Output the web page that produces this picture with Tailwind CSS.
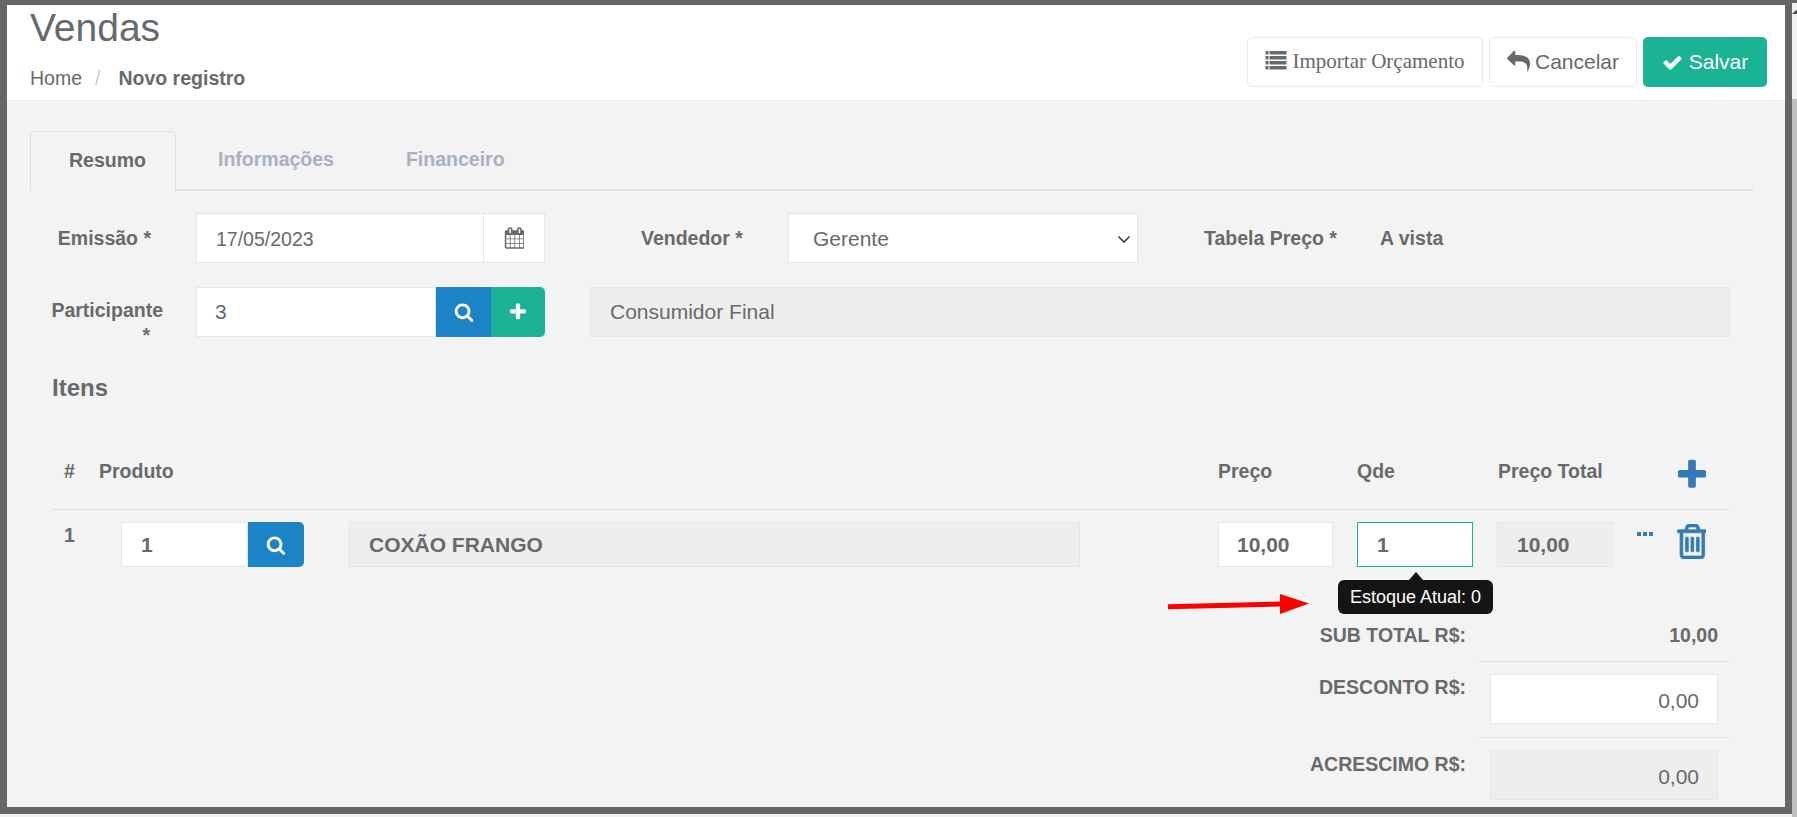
<!DOCTYPE html>
<html lang="pt-BR">
<head>
    <meta charset="UTF-8">
    <title>Vendas</title>
    <script src="https://cdn.jsdelivr.net/npm/@tailwindcss/browser@4"></script>
</head>
<body class="bg-[#f1f1f1] font-['Liberation_Sans',Arial,sans-serif] text-[#676a6c] text-[19.5px]">
<div class="w-[1797px] h-[817px] overflow-hidden flex">
    <!-- Window frame -->
    <div class="relative w-[1792px] h-[814px] shrink-0 border-t-[5px] border-x-[7px] border-b-[7px] border-[#666666] bg-[#f3f3f3] overflow-hidden">

        <!-- Page heading -->
        <header class="h-[96px] bg-white border-b border-[#e7eaec] flex justify-between pl-[23px] pr-[18px]">
            <div>
                <h1 class="text-[39px] leading-[40px] pt-[3px] box-content">Vendas</h1>
                <nav class="flex mt-[18px] leading-[24px]">
                    <a>Home</a>
                    <span class="ml-[13px] text-[#cccccc]">/</span>
                    <strong class="ml-[18px] font-bold">Novo registro</strong>
                </nav>
            </div>
            <div class="flex gap-[6px] pt-[32px] h-[82px] box-content text-[21px]">
                <button class="w-[236px] h-[50px] bg-white border border-[#e7eaec] rounded-[5px] flex items-center justify-center gap-[5px] font-['Liberation_Serif',serif]">
                    <svg class="w-[22px] h-[21px] mb-[3px] fill-current" viewBox="0 0 21 21"><rect y="1" width="3" height="3.5"/><rect x="4" y="1" width="17" height="3.5"/><rect y="6" width="3" height="3.5"/><rect x="4" y="6" width="17" height="3.5"/><rect y="11" width="3" height="3.5"/><rect x="4" y="11" width="17" height="3.5"/><rect y="16" width="3" height="3.5"/><rect x="4" y="16" width="17" height="3.5"/></svg>
                    Importar Orçamento
                </button>
                <button class="w-[148px] h-[50px] bg-white border border-[#e7eaec] rounded-[5px] flex items-center justify-center gap-[5px]">
                    <svg class="w-[23px] h-[23px] mb-[1px] fill-current" viewBox="0 0 1792 1792"><path d="M1792 1120q0 166-127 451-3 7-10.5 24t-13.5 30-13 22q-12 17-28 17-15 0-23.5-10t-8.5-25q0-9 2.5-26.5t2.5-23.5q5-68 5-123 0-101-17.5-181t-48.5-138.5-80-101-105.5-69.5-133-42.5-154-21.5-175.5-6h-224v256q0 26-19 45t-45 19-45-19l-512-512q-19-19-19-45t19-45l512-512q19-19 45-19t45 19 19 45v256h224q713 0 875 403 53 134 53 333z"/></svg>
                    Cancelar
                </button>
                <button class="w-[124px] h-[50px] bg-[#1ab394] text-white rounded-[5px] flex items-center justify-center gap-[6px]">
                    <svg class="w-[21px] h-[21px] fill-current" viewBox="0 0 1792 1792"><path d="M1671 566q0 40-28 68l-724 724-136 136q-28 28-68 28t-68-28l-136-136-362-362q-28-28-28-68t28-68l136-136q28-28 68-28t68 28l294 295 656-657q28-28 68-28t68 28l136 136q28 28 28 68z"/></svg>
                    Salvar
                </button>
            </div>
        </header>

        <!-- Tabs -->
        <div class="mt-[30px] ml-[23px] mr-[32px] h-[60px] border-b-2 border-[#e0e0e0] flex font-bold">
            <div class="w-[146px] h-[60px] pb-[2px] bg-[#f3f3f3] border border-b-0 border-[#e0e0e0] rounded-t-[5px] flex items-center pl-[38px]">Resumo</div>
            <div class="ml-[42px] h-[58px] flex items-center text-[#a7b1c2]">Informações</div>
            <div class="ml-[72px] h-[58px] flex items-center text-[#a7b1c2]">Financeiro</div>
        </div>

        <!-- Form -->
        <div class="pl-[45px] pr-[55px]">
            <div class="flex mt-[22px] h-[50px]">
                <label class="w-[99px] font-bold text-right pt-[13px] leading-[24px]">Emissão *</label>
                <div class="ml-[45px] w-[349px] h-[50px] bg-white border border-[#e5e6e7] flex items-center">
                    <span class="flex-1 pl-[19px] pt-[3px]">17/05/2023</span>
                    <span class="w-[61px] h-full border-l border-[#e5e6e7] flex items-center justify-center">
                        <svg class="w-[20px] h-[22px] fill-current" viewBox="0 0 1664 1792"><path d="M192 1664h288v-288h-288v288zm352 0h320v-288h-320v288zm-352-352h288v-320h-288v320zm352 0h320v-320h-320v320zm-352-384h288v-288h-288v288zm736 736h320v-288h-320v288zm-384-736h320v-288h-320v288zm768 736h288v-288h-288v288zm-384-352h320v-320h-320v320zm-352-864v-288q0-13-9.5-22.5t-22.5-9.5h-64q-13 0-22.5 9.5t-9.5 22.5v288q0 13 9.5 22.5t22.5 9.5h64q13 0 22.5-9.5t9.5-22.5zm736 864h288v-320h-288v320zm-384-384h320v-288h-320v288zm384 0h288v-288h-288v288zm32-480v-288q0-13-9.5-22.5t-22.5-9.5h-64q-13 0-22.5 9.5t-9.5 22.5v288q0 13 9.5 22.5t22.5 9.5h64q13 0 22.5-9.5t9.5-22.5zm384-64v1280q0 52-38 90t-90 38h-1408q-52 0-90-38t-38-90v-1280q0-52 38-90t90-38h128v-96q0-66 47-113t113-47h64q66 0 113 47t47 113v96h384v-96q0-66 47-113t113-47h64q66 0 113 47t47 113v96h128q52 0 90 38t38 90z"/></svg>
                    </span>
                </div>
                <label class="ml-[96px] w-[147px] font-bold pt-[13px] leading-[24px]">Vendedor *</label>
                <div class="w-[350px] h-[50px] pt-[2px] text-[21px] bg-white border border-[#e5e6e7] flex items-center justify-between pl-[24px] pr-[6px]">
                    <span>Gerente</span>
                    <svg class="w-[14px] h-[14px]" viewBox="0 0 14 14" fill="none" stroke="#444444" stroke-width="1.6"><path d="M1.5 4.5 7 10l5.5-5.5"/></svg>
                </div>
                <label class="ml-[66px] w-[176px] font-bold pt-[13px] leading-[24px]">Tabela Preço *</label>
                <span class="font-bold pt-[13px] leading-[24px]">A vista</span>
            </div>

            <div class="flex mt-[24px] h-[50px]">
                <label class="w-[98px] pt-[11px] font-bold leading-[25px] flex flex-col items-end">
                    <span class="mr-[-13px] whitespace-nowrap">Participante</span>
                    <span>*</span>
                </label>
                <div class="ml-[46px] w-[349px] h-[50px] flex">
                    <span class="flex-1 bg-white border border-[#e5e6e7] pl-[18px] text-[21px] flex items-center">3</span>
                    <span class="w-[55px] bg-[#1c84c6] text-white flex items-center justify-center">
                        <svg class="w-[20px] h-[20px] fill-current" viewBox="0 0 1792 1792"><path d="M1216 832q0-185-131.5-316.5t-316.5-131.5-316.5 131.5-131.5 316.5 131.5 316.5 316.5 131.5 316.5-131.5 131.5-316.5zm512 832q0 52-38 90t-90 38q-54 0-90-38l-343-342q-179 124-399 124-143 0-273.5-55.5t-225-150-150-225-55.5-273.5 55.5-273.5 150-225 225-150 273.5-55.5 273.5 55.5 225 150 150 225 55.5 273.5q0 220-124 399l343 343q37 37 37 90z"/></svg>
                    </span>
                    <span class="w-[54px] bg-[#1ab394] text-white rounded-r-[5px] flex items-center justify-center">
                        <svg class="w-[20px] h-[20px] fill-current" viewBox="0 0 1792 1792"><path d="M1600 736v192q0 40-28 68t-68 28h-416v416q0 40-28 68t-68 28h-192q-40 0-68-28t-28-68v-416h-416q-40 0-68-28t-28-68v-192q0-40 28-68t68-28h416v-416q0-40 28-68t68-28h192q40 0 68 28t28 68v416h416q40 0 68 28t28 68z"/></svg>
                    </span>
                </div>
                <div class="ml-[45px] flex-1 bg-[#eeeeee] border border-[#e5e6e7] pl-[19px] text-[21px] flex items-center">Consumidor Final</div>
            </div>

            <h3 class="mt-[36px] text-[24px] leading-[30px] font-bold">Itens</h3>

            <!-- Items table -->
            <div class="mt-[52px] h-[55px] border-b border-[#e0e0e0] grid grid-cols-[47px_1119px_139px_140px_179px_54px] font-bold">
                <span class="pl-[12px] pt-[4px] leading-[24px]">#</span>
                <span class="pt-[4px] leading-[24px]">Produto</span>
                <span class="pt-[4px] leading-[24px]">Preço</span>
                <span class="pt-[4px] leading-[24px]">Qde</span>
                <span class="pl-[1px] pt-[4px] leading-[24px]">Preço Total</span>
                <svg class="w-[32px] h-[32px] mt-[4px] fill-[#337ab7]" viewBox="96 96 1600 1600"><path d="M1600 736v192q0 40-28 68t-68 28h-416v416q0 40-28 68t-68 28h-192q-40 0-68-28t-28-68v-416h-416q-40 0-68-28t-28-68v-192q0-40 28-68t68-28h416v-416q0-40 28-68t68-28h192q40 0 68 28t28 68v416h416q40 0 68 28t28 68z"/></svg>
            </div>
            <div class="h-[107px] pt-[12px] grid grid-cols-[47px_1119px_139px_140px_179px_54px] font-bold">
                <span class="pl-[12px] leading-[24px] pt-[1px]">1</span>
                <div class="flex h-[45px] text-[21px]">
                    <span class="ml-[22px] w-[127px] bg-white border border-[#e5e6e7] pl-[19px] pt-[1px] flex items-center">1</span>
                    <span class="w-[56px] bg-[#1c84c6] text-white rounded-r-[5px] flex items-center justify-center">
                        <svg class="w-[20px] h-[20px] fill-current" viewBox="0 0 1792 1792"><path d="M1216 832q0-185-131.5-316.5t-316.5-131.5-316.5 131.5-131.5 316.5 131.5 316.5 316.5 131.5 316.5-131.5 131.5-316.5zm512 832q0 52-38 90t-90 38q-54 0-90-38l-343-342q-179 124-399 124-143 0-273.5-55.5t-225-150-150-225-55.5-273.5 55.5-273.5 150-225 225-150 273.5-55.5 273.5 55.5 225 150 150 225 55.5 273.5q0 220-124 399l343 343q37 37 37 90z"/></svg>
                    </span>
                    <span class="ml-[45px] w-[731px] bg-[#eeeeee] border border-[#e5e6e7] pl-[19px] pt-[1px] flex items-center">COXÃO FRANGO</span>
                </div>
                <span class="w-[115px] h-[45px] bg-white border border-[#e5e6e7] pl-[18px] pt-[1px] text-[21px] flex items-center">10,00</span>
                <div class="relative">
                    <span class="w-[116px] h-[45px] bg-white border border-[#1ab394] pl-[19px] pt-[1px] text-[21px] flex items-center">1</span>
                    <!-- Stock tooltip -->
                    <div class="absolute left-[-19px] top-[50px] z-10 flex flex-col items-center w-[155px]">
                        <span class="w-0 h-0 border-x-[7px] border-x-transparent border-b-[8px] border-b-[#111111]"></span>
                        <span class="w-full h-[34px] bg-[#151515] text-white font-normal text-[18px] rounded-[6px] flex items-center justify-center">Estoque Atual: 0</span>
                    </div>
                </div>
                <div class="flex">
                    <span class="w-[116px] h-[45px] bg-[#eeeeee] border border-[#e5e6e7] pl-[19px] pt-[1px] text-[21px] flex items-center">10,00</span>
                    <svg class="ml-[24px] mt-[10px] w-[17px] h-[5px] fill-[#337ab7]" viewBox="0 0 17 5"><rect width="4" height="4"/><rect x="6" width="4" height="4"/><rect x="12" width="4" height="4"/></svg>
                </div>
                <svg class="w-[30px] h-[35px] mt-[2px] fill-[#337ab7] stroke-[#337ab7] stroke-[36px]" viewBox="128 128 1408 1536" preserveAspectRatio="none"><path d="M704 736v576q0 14-9 23t-23 9h-64q-14 0-23-9t-9-23v-576q0-14 9-23t23-9h64q14 0 23 9t9 23zm256 0v576q0 14-9 23t-23 9h-64q-14 0-23-9t-9-23v-576q0-14 9-23t23-9h64q14 0 23 9t9 23zm256 0v576q0 14-9 23t-23 9h-64q-14 0-23-9t-9-23v-576q0-14 9-23t23-9h64q14 0 23 9t9 23zm128 724v-948h-896v948q0 22 7 40.5t14.5 27 10.5 8.5h832q3 0 10.5-8.5t14.5-27 7-40.5zm-672-1076h448l-48-117q-7-9-17-11h-317q-10 2-17 11zm928 32v64q0 14-9 23t-23 9h-96v948q0 83-47 143.5t-113 60.5h-832q-66 0-113-58.5t-47-141.5v-952h-96q-14 0-23-9t-9-23v-64q0-14 9-23t23-9h309l70-167q15-37 54-63t79-26h320q40 0 79 26t54 63l70 167h309q14 0 23 9t9 23z"/></svg>
            </div>

            <!-- Totals -->
            <div class="grid grid-cols-[1426px_252px] font-bold">
                <span class="h-[45px] pr-[12px] text-right pt-[6px] leading-[24px]">SUB TOTAL R$:</span>
                <span class="h-[45px] border-b border-[#e0e0e0] pr-[12px] text-right pt-[6px] leading-[24px]">10,00</span>
                <span class="h-[76px] pr-[12px] text-right pt-[13px] leading-[24px]">DESCONTO R$:</span>
                <div class="h-[76px] border-b border-[#e0e0e0] pt-[12px] pl-[12px]">
                    <span class="w-[228px] h-[50px] bg-white border border-[#e5e6e7] pr-[18px] pt-[3px] text-[21px] flex items-center justify-end font-normal">0,00</span>
                </div>
                <span class="pr-[12px] text-right pt-[14px] leading-[24px]">ACRESCIMO R$:</span>
                <div class="pt-[12px] pl-[12px]">
                    <span class="w-[228px] h-[50px] bg-[#eeeeee] border border-[#e5e6e7] pr-[18px] pt-[3px] text-[21px] flex items-center justify-end font-normal">0,00</span>
                </div>
            </div>
        </div>

        <!-- Annotation arrow -->
        <svg class="absolute left-[1161px] top-[589px] z-20" width="141" height="20" viewBox="0 0 141 20"><path d="M0 10.2 112 7.6V0l29 9.6L112 20v-7.4L0 15.2z" fill="#ff0000"/></svg>
    </div>
    <!-- Scrollbar sliver -->
    <div class="w-[5px] h-full flex flex-col border-t-[3px] border-[#666666]">
        <div class="h-[96px] bg-[#f1f1f1]">
            <svg class="mt-[7px]" width="5" height="4" viewBox="0 0 5 4"><path d="M0 4 4 0l1 1v3z" fill="#505050"/></svg>
        </div>
        <div class="flex-1 bg-[#c1c1c1]"></div>
    </div>
</div>
</body>
</html>
